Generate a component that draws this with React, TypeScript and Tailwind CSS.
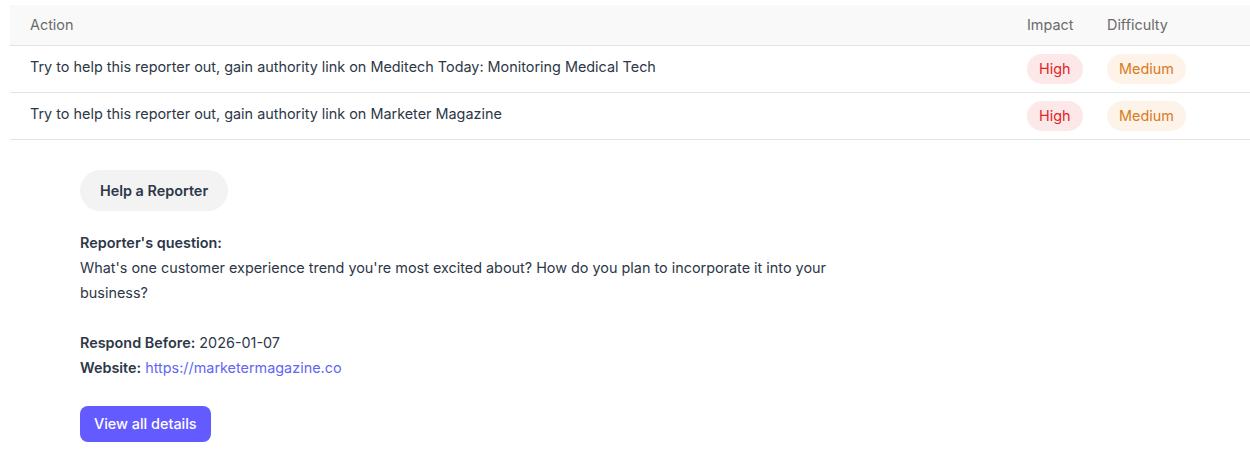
import React from "react";

const rows = [
  "Try to help this reporter out, gain authority link on Meditech Today: Monitoring Medical Tech",
  "Try to help this reporter out, gain authority link on Marketer Magazine",
];

export default function App() {
  return (
    <div className="bg-white w-[1250px] h-[461px] overflow-hidden pt-[5px] pl-[10px] text-[#2d3748]" style={{ fontFamily: "Inter, 'Noto Sans', sans-serif" }}>
      <div className="flex items-center h-[41px] bg-[#f9f9f9] border-b border-[#e2e2e2] text-[14.4px] text-[#6b6b6b]">
        <div className="flex-1 pl-[20px]">Action</div>
        <div className="w-[80px]">Impact</div>
        <div className="w-[143px]">Difficulty</div>
      </div>
      {rows.map((r) => (
        <div key={r} className="flex items-center h-[47px] border-b border-[#e2e2e2] text-[14.4px]">
          <div className="flex-1 pl-[20px] -mt-[5px]">{r}</div>
          <div className="w-[80px] flex">
            <span className="h-[30px] px-[12px] flex items-center rounded-full bg-[#fde8e9] text-[#e02424]">High</span>
          </div>
          <div className="w-[143px] flex">
            <span className="h-[30px] px-[12px] flex items-center rounded-full bg-[#fdf3e8] text-[#d97a1d]">Medium</span>
          </div>
        </div>
      ))}
      <div className="pl-[70px] pt-[30px] text-[14.4px]">
        <div className="inline-flex items-center h-[41px] px-[20px] rounded-full bg-[#f3f3f4] font-semibold text-[#2d3748]">Help a Reporter</div>
        <div className="mt-[19px] leading-[25px] w-[800px]">
          <div className="font-semibold">Reporter's question:</div>
          <div>What's one customer experience trend you're most excited about? How do you plan to incorporate it into your business?</div>
        </div>
        <div className="mt-[25px] leading-[25px]">
          <div><span className="font-semibold">Respond Before:</span> 2026-01-07</div>
          <div><span className="font-semibold">Website:</span> <a className="text-[#6366f1]">https://marketermagazine.co</a></div>
        </div>
        <div className="mt-[26px]">
          <button className="h-[36px] px-[14px] rounded-lg bg-[#635bff] text-white font-medium text-[14.4px]">View all details</button>
        </div>
      </div>
    </div>
  );
}
